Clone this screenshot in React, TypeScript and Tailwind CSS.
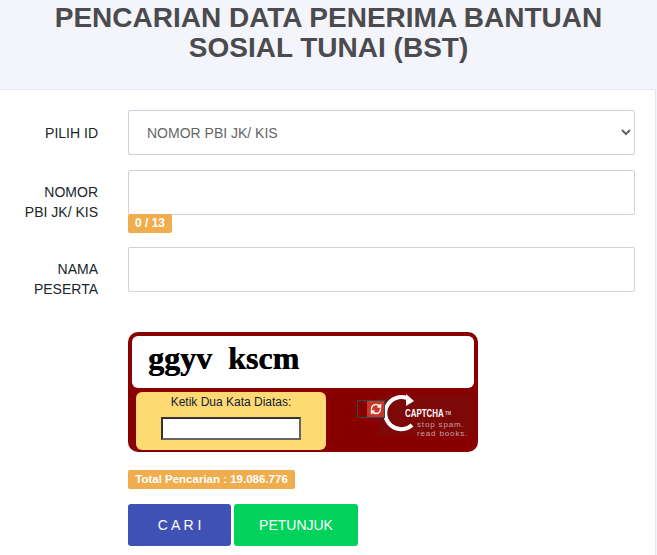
import React from "react";
import { RefreshCw } from "lucide-react";

const label = "w-[98px] shrink-0 text-right text-[14px] leading-[20px] text-[#212529]";
const field = "w-[507px] h-[45px] bg-white border border-[#cfd0dd] rounded-[2px] block";

export default function App() {
  return (
    <div className="h-[555px] overflow-hidden flex flex-col bg-[#f4f5fa] font-['Liberation_Sans',Arial,sans-serif]">
      <div className="h-[89px] shrink-0 pt-[3px] text-center text-[28px] leading-[30px] font-bold text-[#4b4b4f]">
        <div>PENCARIAN DATA PENERIMA BANTUAN</div>
        <div>SOSIAL TUNAI (BST)</div>
      </div>
      <div className="flex-1 bg-white border-t border-r border-[#e6e7ee] mr-px pt-[20px] flex flex-col">
        <div className="flex gap-[30px] items-center">
          <div className={label}>PILIH ID</div>
          <select className={field + " pl-[14px] text-[14px] text-[#666] outline-none"} defaultValue="a">
            <option value="a">NOMOR PBI JK/ KIS</option>
          </select>
        </div>

        <div className="flex gap-[30px] mt-[15px]">
          <div className={label + " pt-[12px]"}>
            NOMOR
            <br />
            PBI JK/ KIS
          </div>
          <div>
            <div className={field}></div>
            <div className="-mt-px w-[44px] h-[19px] bg-[#f0ad4e] rounded-[2px] text-white text-[12px] font-bold leading-[19px] text-center">
              0 / 13
            </div>
          </div>
        </div>

        <div className="flex gap-[30px] mt-[14px]">
          <div className={label + " pt-[12px]"}>
            NAMA
            <br />
            PESERTA
          </div>
          <div className={field}></div>
        </div>

        <div className="ml-[128px] mt-[33px] w-[350px] h-[120px] bg-[#880000] rounded-[10px] px-[4px] pt-[4px] pb-[2px] flex flex-col">
          <div className="h-[52px] shrink-0 bg-white rounded-[6px] pl-[16px] pt-[4px] font-['Liberation_Serif',serif] font-bold text-[32px] leading-[36px] text-black [word-spacing:8px] [text-shadow:0.5px_0_0_#000] whitespace-pre">
            ggyv kscm
          </div>
          <div className="flex mt-[4px] pl-[4px]">
            <div className="w-[190px] h-[58px] bg-[#ffd972] rounded-[6px] flex flex-col items-center">
              <div className="text-[12px] leading-[14px] mt-[3px] text-[#10203a]">Ketik Dua Kata Diatas:</div>
              <div className="w-[140px] h-[23px] mt-[8px] bg-white border-2 border-t-[#333] border-l-[#333] border-r-[#666] border-b-[#666]"></div>
            </div>
            <div className="relative flex-1">
              <div className="absolute left-[52px] top-[3px] w-[95px] h-[40px] bg-[#7c0808]"></div>
              <svg className="absolute left-[56px] top-[1px]" width="46" height="46" viewBox="0 0 46 46" fill="none">
                <path d="M25 5.2 A16 16 0 1 0 30 32" stroke="#fff" strokeWidth="4" />
                <path d="M24 1 L32 8 L24 13 Z" fill="#fff" />
              </svg>
              <div className="absolute left-[31px] top-[8px] w-[28px] h-[18px] border border-[#33474d] z-10 flex justify-end">
                <div className="w-[17px] h-[16px] bg-[#c9362a] flex items-center justify-center">
                  <RefreshCw size={12} color="#fff" strokeWidth={3} />
                </div>
              </div>
              <div className="absolute left-[79px] top-[16px] text-[11px] leading-[11px] text-white font-bold scale-x-[0.72] origin-left whitespace-nowrap">
                CAPTCHA<span className="text-[6px] align-top text-[#d9b8b8]"> TM</span>
              </div>
              <div className="absolute left-[91px] top-[28px] text-[8px] leading-[9.2px] tracking-[0.85px] text-[#c8a0a0] whitespace-nowrap">
                stop spam.
                <br />
                read books.
              </div>
            </div>
          </div>
        </div>

        <div className="ml-[128px] mt-[18px] w-[167px] h-[19px] bg-[#f0ad4e] rounded-[2px] text-white text-[11.5px] font-bold leading-[19px] text-center">
          Total Pencarian : 19.086.776
        </div>

        <div className="ml-[128px] mt-[15px] flex gap-[3px]">
          <button className="w-[103px] h-[42px] bg-[#3f51b5] rounded-[3px] text-white text-[14px]">C A R I</button>
          <button className="w-[124px] h-[42px] bg-[#00d25b] rounded-[3px] text-white text-[14px]">PETUNJUK</button>
        </div>
      </div>
    </div>
  );
}
